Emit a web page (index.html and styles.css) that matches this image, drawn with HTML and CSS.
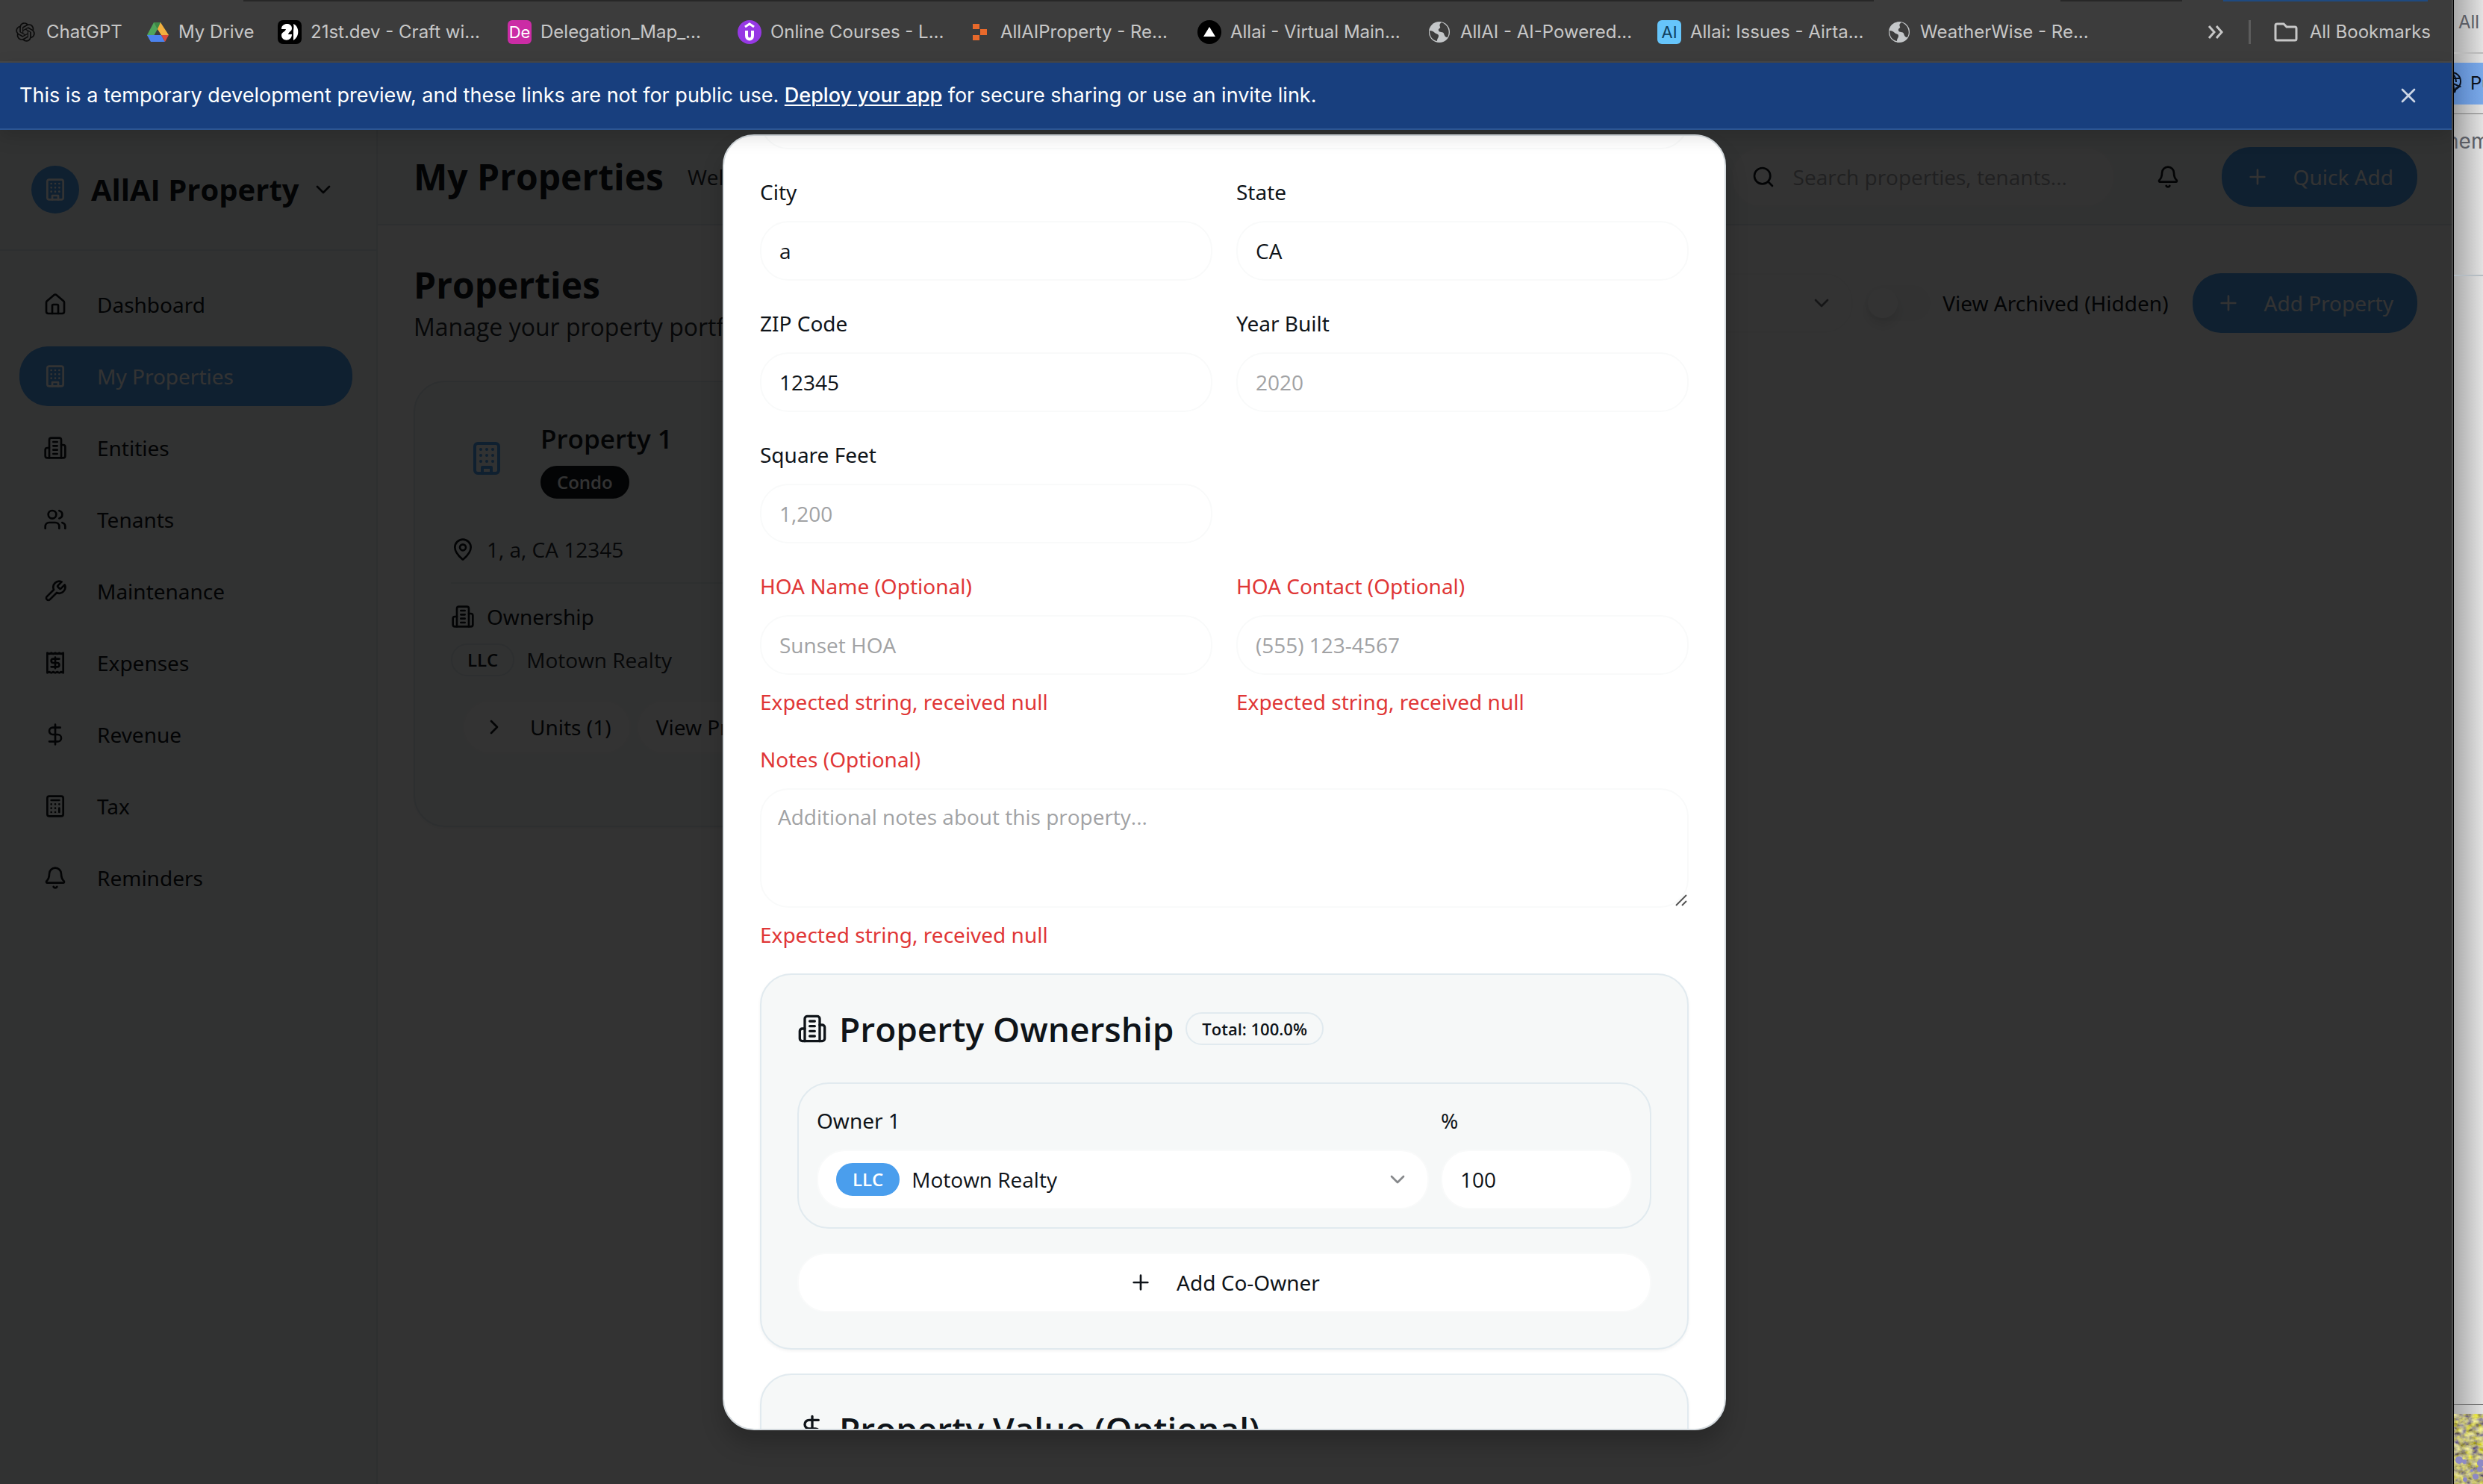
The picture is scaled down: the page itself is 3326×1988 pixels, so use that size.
FILE: index.html
```html
<!DOCTYPE html>
<html lang="en">
<head>
<meta charset="utf-8">
<title>AllAI Property - My Properties</title>
<link rel="stylesheet" href="styles.css">
</head>
<body>
<svg class="sprite" aria-hidden="true">
  <symbol id="i-building" viewBox="0 0 24 24"><rect width="16" height="20" x="4" y="2" rx="2"/><path d="M9 22v-4h6v4M8 6h.01M16 6h.01M12 6h.01M12 10h.01M12 14h.01M16 10h.01M16 14h.01M8 10h.01M8 14h.01"/></symbol>
  <symbol id="i-building2" viewBox="0 0 24 24"><path d="M6 22V4a2 2 0 0 1 2-2h8a2 2 0 0 1 2 2v18Z"/><path d="M6 12H4a2 2 0 0 0-2 2v6a2 2 0 0 0 2 2h2M18 9h2a2 2 0 0 1 2 2v9a2 2 0 0 1-2 2h-2M10 6h4M10 10h4M10 14h4M10 18h4"/></symbol>
  <symbol id="i-home" viewBox="0 0 24 24"><path d="M15 21v-8a1 1 0 0 0-1-1h-4a1 1 0 0 0-1 1v8"/><path d="M3 10a2 2 0 0 1 .709-1.528l7-5.999a2 2 0 0 1 2.582 0l7 5.999A2 2 0 0 1 21 10v9a2 2 0 0 1-2 2H5a2 2 0 0 1-2-2z"/></symbol>
  <symbol id="i-users" viewBox="0 0 24 24"><path d="M16 21v-2a4 4 0 0 0-4-4H6a4 4 0 0 0-4 4v2"/><circle cx="9" cy="7" r="4"/><path d="M22 21v-2a4 4 0 0 0-3-3.87M16 3.13a4 4 0 0 1 0 7.75"/></symbol>
  <symbol id="i-wrench" viewBox="0 0 24 24"><path d="M14.7 6.3a1 1 0 0 0 0 1.4l1.6 1.6a1 1 0 0 0 1.4 0l3.77-3.77a6 6 0 0 1-7.94 7.94l-6.91 6.91a2.12 2.12 0 0 1-3-3l6.91-6.91a6 6 0 0 1 7.94-7.94l-3.76 3.76z"/></symbol>
  <symbol id="i-receipt" viewBox="0 0 24 24"><path d="M4 2v20l2-1 2 1 2-1 2 1 2-1 2 1 2-1 2 1V2l-2 1-2-1-2 1-2-1-2 1-2-1-2 1Z"/><path d="M16 8h-6a2 2 0 1 0 0 4h4a2 2 0 1 1 0 4H8M12 17.5v-11"/></symbol>
  <symbol id="i-dollar" viewBox="0 0 24 24"><path d="M12 2v20M17 5H9.5a3.5 3.5 0 0 0 0 7h5a3.5 3.5 0 0 1 0 7H6"/></symbol>
  <symbol id="i-calc" viewBox="0 0 24 24"><rect width="16" height="20" x="4" y="2" rx="2"/><path d="M8 6h8M16 14v4M16 10h.01M12 10h.01M8 10h.01M12 14h.01M8 14h.01M12 18h.01M8 18h.01"/></symbol>
  <symbol id="i-bell" viewBox="0 0 24 24"><path d="M10.268 21a2 2 0 0 0 3.464 0"/><path d="M3.262 15.326A1 1 0 0 0 4 17h16a1 1 0 0 0 .74-1.673C19.41 13.956 18 12.499 18 8A6 6 0 0 0 6 8c0 4.499-1.411 5.956-2.738 7.326"/></symbol>
  <symbol id="i-pin" viewBox="0 0 24 24"><path d="M20 10c0 4.993-5.539 10.193-7.399 11.799a1 1 0 0 1-1.202 0C9.539 20.193 4 14.993 4 10a8 8 0 0 1 16 0"/><circle cx="12" cy="10" r="3"/></symbol>
  <symbol id="i-search" viewBox="0 0 24 24"><circle cx="11" cy="11" r="8"/><path d="m21 21-4.3-4.3"/></symbol>
  <symbol id="i-plus" viewBox="0 0 24 24"><path d="M5 12h14M12 5v14"/></symbol>
  <symbol id="i-down" viewBox="0 0 24 24"><path d="m6 9 6 6 6-6"/></symbol>
  <symbol id="i-right" viewBox="0 0 24 24"><path d="m9 18 6-6-6-6"/></symbol>
  <symbol id="i-x" viewBox="0 0 24 24"><path d="M18 6 6 18M6 6l12 12"/></symbol>
  <symbol id="i-globe" viewBox="0 0 32 32"><circle cx="16" cy="16" r="14" fill="#c4c7c9" stroke="none"/><path d="M3 14c3 0 5 1 7 3s5 1 5 4-2 3-2 7c-6-1-10-6-10-14zM19 3c-3 2-3 4-2 6s-3 2-2 5 6 1 7 4 2 5 5 5c4-7 1-17-8-20z" fill="#3c3c3c" stroke="none"/></symbol>
</svg>
<div class="desktop">
  <div class="window">
    <div class="tab-edge"><i class="edge-tabs"></i><i class="edge-box"></i><i class="edge-blue"></i></div>
    <nav class="bookmarks" aria-label="Bookmarks">
      <a class="bookmark bookmark--short" href="#"><svg class="favicon" viewBox="-3 -3 30 30"><path fill="#0c0c0c" d="M22.2819 9.8211a5.9847 5.9847 0 0 0-.5157-4.9108 6.0462 6.0462 0 0 0-6.5098-2.9A6.0651 6.0651 0 0 0 4.9807 4.1818a5.9847 5.9847 0 0 0-3.9977 2.9 6.0462 6.0462 0 0 0 .7427 7.0966 5.98 5.98 0 0 0 .511 4.9107 6.051 6.051 0 0 0 6.5146 2.9001A5.9847 5.9847 0 0 0 13.2599 24a6.0557 6.0557 0 0 0 5.7718-4.2058 5.9894 5.9894 0 0 0 3.9977-2.9001 6.0557 6.0557 0 0 0-.7475-7.0729zm-9.022 12.6081a4.4755 4.4755 0 0 1-2.8764-1.0408l.1419-.0804 4.7783-2.7582a.7948.7948 0 0 0 .3927-.6813v-6.7369l2.02 1.1686a.071.071 0 0 1 .038.052v5.5826a4.504 4.504 0 0 1-4.4945 4.4944zm-9.6607-4.1254a4.4708 4.4708 0 0 1-.5346-3.0137l.142.0852 4.783 2.7582a.7712.7712 0 0 0 .7806 0l5.8428-3.3685v2.3324a.0804.0804 0 0 1-.0332.0615L9.74 19.9502a4.4992 4.4992 0 0 1-6.1408-1.6464zM2.3408 7.8956a4.485 4.485 0 0 1 2.3655-1.9728V11.6a.7664.7664 0 0 0 .3879.6765l5.8144 3.3543-2.0201 1.1685a.0757.0757 0 0 1-.071 0l-4.8303-2.7865A4.504 4.504 0 0 1 2.3408 7.872zm16.5963 3.8558L13.1038 8.364 15.1192 7.2a.0757.0757 0 0 1 .071 0l4.8303 2.7913a4.4944 4.4944 0 0 1-.6765 8.1042v-5.6772a.79.79 0 0 0-.407-.667zm2.0107-3.0231l-.142-.0852-4.7735-2.7818a.7759.7759 0 0 0-.7854 0L9.409 9.2297V6.8974a.0662.0662 0 0 1 .0284-.0615l4.8303-2.7866a4.4992 4.4992 0 0 1 6.6802 4.66zM8.3065 12.863l-2.02-1.1638a.0804.0804 0 0 1-.038-.0567V6.0742a4.4992 4.4992 0 0 1 7.3757-3.4537l-.142.0805L8.704 5.459a.7948.7948 0 0 0-.3927.6813zm1.0976-2.3654l2.602-1.4998 2.6069 1.4998v2.9994l-2.5974 1.4997-2.6067-1.4997Z"/></svg>ChatGPT</a>
      <a class="bookmark bookmark--short" href="#"><svg class="favicon" viewBox="0 0 32 32"><path d="M11 3h10l-5 9-9 16-5-8z" fill="#4fa55a"/><path d="M11 3h10l-5 9z" fill="#3f8746"/><path d="M20 3l11 17H21l-5-8z" fill="#f3b03f"/><path d="M7 29l-5-9h19l5 9z" fill="#4c83ee"/><path d="M26 29l-5-9h10z" fill="#dc4b3c"/></svg>My Drive</a>
      <a class="bookmark" href="#"><svg class="favicon" viewBox="0 0 32 32"><rect width="32" height="32" rx="7" fill="#000"/><path d="M5 12C5 3 19 3 19 11c0 4-4 4-5 8h5c0 10-14 10-14 1 0-4 5-4 6-8z" fill="#fff"/><path d="M21 5c8 3 9 17 0 22V16c0-4 1-6 0-11z" fill="#fff"/></svg>21st.dev - Craft wi...</a>
      <a class="bookmark" href="#"><span class="favicon favicon--pink">De</span>Delegation_Map_...</a>
      <a class="bookmark" href="#"><svg class="favicon" viewBox="0 0 32 32" fill="none" stroke="#fff"><circle cx="16" cy="16" r="16" fill="#9638e4" stroke="none"/><path d="M12 14v7c0 6 8 6 8 0v-7" stroke-width="4"/><path d="M10 9l6-4 6 4" stroke-width="3"/></svg>Online Courses - L...</a>
      <a class="bookmark" href="#"><svg class="favicon" viewBox="0 0 32 32"><path d="M7 5h9v7H7zM17 12h9v8h-9zM7 20h9v7H7z" fill="#e8692b"/></svg>AllAIProperty - Re...</a>
      <a class="bookmark" href="#"><svg class="favicon" viewBox="0 0 32 32"><circle cx="16" cy="16" r="16" fill="#000"/><path d="M16 9l8 13H8z" fill="#fff"/></svg>Allai - Virtual Main...</a>
      <a class="bookmark" href="#"><svg class="favicon"><use href="#i-globe"/></svg>AllAI - AI-Powered...</a>
      <a class="bookmark" href="#"><span class="favicon favicon--sky">AI</span>Allai: Issues - Airta...</a>
      <a class="bookmark" href="#"><svg class="favicon"><use href="#i-globe"/></svg>WeatherWise - Re...</a>
      <button class="more" type="button" aria-label="More bookmarks"><svg viewBox="0 0 32 32" fill="none" stroke="#c7c7c7" stroke-width="3"><path d="M7 8l7 8-7 8M17 8l7 8-7 8"/></svg></button>
      <a class="bookmark bookmark--all" href="#"><svg class="favicon" viewBox="0 0 32 32" fill="none" stroke="#c7c7c7" stroke-width="3"><path d="M2 7a2 2 0 0 1 2-2h9l4 4h11a2 2 0 0 1 2 2v14a2 2 0 0 1-2 2H4a2 2 0 0 1-2-2z"/></svg>All Bookmarks</a>
    </nav>
    <div class="banner">
      <p>This is a temporary development preview, and these links are not for public use. <a href="#">Deploy your app</a> for secure sharing or use an invite link.</p>
      <button type="button" aria-label="Dismiss"><svg class="icon"><use href="#i-x"/></svg></button>
    </div>
    <div class="page">
      <div class="app">
        <aside class="sidebar">
          <div class="brand"><span class="logo"><svg class="icon"><use href="#i-building"/></svg></span><strong>AllAI Property</strong><svg class="icon"><use href="#i-down"/></svg></div>
          <nav class="menu">
            <a href="#"><svg class="icon"><use href="#i-home"/></svg>Dashboard</a>
            <a class="active" href="#"><svg class="icon"><use href="#i-building"/></svg>My Properties</a>
            <a href="#"><svg class="icon"><use href="#i-building2"/></svg>Entities</a>
            <a href="#"><svg class="icon"><use href="#i-users"/></svg>Tenants</a>
            <a href="#"><svg class="icon"><use href="#i-wrench"/></svg>Maintenance</a>
            <a href="#"><svg class="icon"><use href="#i-receipt"/></svg>Expenses</a>
            <a href="#"><svg class="icon"><use href="#i-dollar"/></svg>Revenue</a>
            <a href="#"><svg class="icon"><use href="#i-calc"/></svg>Tax</a>
            <a href="#"><svg class="icon"><use href="#i-bell"/></svg>Reminders</a>
          </nav>
        </aside>
        <div class="main">
          <header class="topbar">
            <h1>My Properties</h1>
            <span class="welcome">Welcome</span>
            <label class="search"><svg class="icon"><use href="#i-search"/></svg><input type="search" aria-label="Search" placeholder="Search properties, tenants..."></label>
            <button class="bell" type="button" aria-label="Notifications"><svg class="icon"><use href="#i-bell"/></svg></button>
            <button class="primary" type="button"><svg class="icon"><use href="#i-plus"/></svg>Quick Add</button>
          </header>
          <main class="content">
            <div class="heading">
              <div class="heading-text"><h2>Properties</h2><p>Manage your property portfolio</p></div>
              <div class="filter"><select aria-label="Entity filter"><option>All Entities</option></select><svg class="icon"><use href="#i-down"/></svg></div>
              <label class="switch"><input type="checkbox">View Archived (Hidden)</label>
              <button class="primary" type="button"><svg class="icon"><use href="#i-plus"/></svg>Add Property</button>
            </div>
            <div class="cards">
              <article class="property">
                <div class="property-head"><span class="property-icon"><svg class="icon icon--xl"><use href="#i-building"/></svg></span><div><h3>Property 1</h3><span class="badge badge--dark">Condo</span></div></div>
                <p class="line"><svg class="icon"><use href="#i-pin"/></svg><span class="muted">1, a, CA 12345</span></p>
                <div class="ownership">
                  <p class="line medium"><svg class="icon"><use href="#i-building2"/></svg>Ownership</p>
                  <p class="line"><span class="badge">LLC</span><span class="muted">Motown Realty</span></p>
                </div>
                <div class="property-actions"><button type="button"><svg class="icon"><use href="#i-right"/></svg>Units (1)</button><button type="button">View Property</button></div>
              </article>
            </div>
          </main>
        </div>
      </div>
      <div class="overlay">
        <div class="modal" role="dialog" aria-label="Edit property">
          <form class="form">
            <input class="input wide" type="text" aria-label="Street address">
            <div class="field"><label for="city">City</label><input class="input" id="city" value="a"></div>
            <div class="field"><label for="state">State</label><input class="input" id="state" value="CA"></div>
            <div class="field"><label for="zip">ZIP Code</label><input class="input" id="zip" value="12345"></div>
            <div class="field"><label for="year">Year Built</label><input class="input" id="year" placeholder="2020"></div>
            <div class="field first"><label for="sqft">Square Feet</label><input class="input" id="sqft" placeholder="1,200"></div>
            <div class="field invalid first"><label for="hoa">HOA Name (Optional)</label><input class="input" id="hoa" placeholder="Sunset HOA"><p>Expected string, received null</p></div>
            <div class="field invalid"><label for="hoac">HOA Contact (Optional)</label><input class="input" id="hoac" placeholder="(555) 123-4567"><p>Expected string, received null</p></div>
            <div class="field invalid wide"><label for="notes">Notes (Optional)</label><div class="notes"><textarea class="input" id="notes" placeholder="Additional notes about this property..."></textarea><svg class="grip" viewBox="0 0 16 16"><path d="M1 15 15 1M9 15l6-6"/></svg></div><p>Expected string, received null</p></div>
            <section class="panel wide">
              <h2><svg class="icon icon--lg"><use href="#i-building2"/></svg>Property Ownership<span class="badge badge--total">Total: 100.0%</span></h2>
              <div class="owner">
                <div class="field"><label for="owner">Owner 1</label><div class="input picker"><span class="badge badge--blue">LLC</span><select id="owner"><option>Motown Realty</option></select><svg class="icon"><use href="#i-down"/></svg></div></div>
                <div class="field"><label for="pct">%</label><input class="input" id="pct" value="100"></div>
              </div>
              <button class="input add" type="button"><svg class="icon"><use href="#i-plus"/></svg>Add Co-Owner</button>
            </section>
            <section class="panel wide">
              <h2><svg class="icon icon--lg"><use href="#i-dollar"/></svg>Property Value (Optional)</h2>
            </section>
          </form>
        </div>
      </div>
    </div>
  </div>
  <div class="behind">
    <p class="behind-bar">All</p>
    <p class="behind-publish"><svg viewBox="0 0 26 32" fill="none" stroke="#0a1220" stroke-width="2"><circle cx="13" cy="13" r="12"/><path d="M1 9h24M1 17h14M12 1c-7 7-7 17 0 24M13 1c5 5 6 9 6 13M15 16l9 4-5 2-2 6z"/></svg>Publish</p>
    <p class="behind-text">hem</p>
    <div class="behind-body"></div>
    <div class="behind-foot"></div>
    <svg class="wallpaper" aria-hidden="true">
      <filter id="meadow" x="0" y="0" width="100%" height="100%"><feTurbulence type="fractalNoise" baseFrequency=".12 .16" numOctaves="3" seed="4"/><feColorMatrix values="1.2 0 0 0 -.1  1.2 0 0 0 -.13  0 0 .6 0 -.1  0 0 0 0 1"/></filter>
      <rect width="100%" height="100%" filter="url(#meadow)"/>
      <g fill="#8d89c4"><circle cx="7" cy="62" r="5"/><circle cx="14" cy="64" r="3"/><circle cx="36" cy="66" r="5"/><circle cx="29" cy="84" r="4"/><circle cx="15" cy="88" r="3"/><circle cx="35" cy="74" r="4"/><circle cx="24" cy="76" r="2"/></g>
    </svg>
  </div>
</div>
</body>
</html>
```
FILE: styles.css
```css
* { box-sizing: border-box; }
:root {
  --fg: #0f1419;
  --muted: #25292e;
  --primary: #4a9eed;
  --panel: #f6f8f8;
  --line: #e1eaef;
  --field: #f9fafa;
  --danger: #e03636;
  --medium: "Noto Sans", "Open Sans", sans-serif;
}
html, body { height: 100%; }
body { margin: 0; font: 28px/40px "Open Sans", "Noto Sans", sans-serif; color: var(--fg); overflow: hidden; }
h1, h2, h3, p { margin: 0; }
a { color: inherit; text-decoration: none; }
button, input, select, textarea { font: inherit; color: inherit; border: 0; background: none; padding: 0; margin: 0; }
input, textarea, select { outline: 0; min-width: 0; }
select { appearance: none; }
.sprite { position: absolute; width: 0; height: 0; }
.icon { width: 32px; height: 32px; flex: none; fill: none; stroke: currentColor; stroke-width: 2; stroke-linecap: round; stroke-linejoin: round; }
.icon--lg { width: 40px; height: 40px; }
.icon--xl { width: 48px; height: 48px; }

.desktop { display: flex; min-height: 100vh; }
.window { flex: 1; min-width: 0; display: flex; flex-direction: column; border-right: 2px solid #4d4d4d; background: #3c3c3c; }

.tab-edge { display: flex; height: 2px; padding: 0 32px 0 326px; }
.edge-tabs { flex: 1; background: #272727; margin-right: 250px; }
.edge-box { width: 163px; background: #272727; margin-right: 55px; }
.edge-blue { width: 274px; background: #1f4a80; }
.bookmarks { display: flex; align-items: center; height: 82px; padding: 2px 28px 0 18px; border-bottom: 2px solid #474747; font: 24px/32px Inter, sans-serif; color: #c7c7c7; }
.bookmark { display: flex; align-items: center; gap: 12px; width: 308px; white-space: nowrap; }
.bookmark--short { width: 177px; }
.favicon { width: 32px; height: 32px; flex: none; }
.favicon--pink, .favicon--sky { border-radius: 6px; font-size: 22px; text-align: center; }
.favicon--pink { background: #cb2ca5; color: #fff; }
.favicon--sky { background: #66c5fb; color: #10405f; }
.more { margin-left: auto; width: 32px; height: 32px; }
.more svg { width: 32px; height: 32px; display: block; }
.bookmark--all { width: auto; gap: 16px; margin-left: 28px; position: relative; padding-left: 34px; }
.bookmark--all::before { content: ""; position: absolute; left: 0; width: 3px; height: 32px; background: #5c5c5c; }

.banner { position: relative; z-index: 2; display: flex; align-items: center; justify-content: space-between; height: 90px; padding: 0 42px 0 26px; background: #183f7e; border-bottom: 2px solid #2c5592; color: #fff; font: 27px/40px Inter, sans-serif; box-shadow: 0 8px 24px rgba(0, 0, 0, .15); }
.banner a { font-weight: 500; text-decoration: underline; text-underline-offset: 3px; text-decoration-thickness: 2px; }
.banner button { display: flex; color: #ccd6e6; }

.page { flex: 1; position: relative; display: flex; background: #fff; }
.app { flex: 1; min-width: 0; display: flex; }
.sidebar { width: 506px; flex: none; background: var(--panel); border-right: 2px solid var(--line); }
.brand { display: flex; align-items: center; height: 162px; padding: 0 42px; border-bottom: 2px solid var(--line); font-size: 40px; line-height: 56px; }
.brand strong { margin: 0 16px; }
.logo { display: grid; place-items: center; width: 64px; height: 64px; border-radius: 50%; background: var(--primary); color: #fff; }
.menu { display: grid; gap: 16px; padding: 32px 32px 32px 26px; font-family: var(--medium); }
.menu a { display: flex; align-items: center; gap: 40px; height: 80px; padding: 0 32px; border-radius: 38px; }
.menu .active { background: var(--primary); color: #fff; }

.main { flex: 1; min-width: 0; }
.topbar { display: flex; align-items: center; gap: 32px; height: 128px; padding: 0 46px 0 48px; background: var(--panel); border-bottom: 2px solid var(--line); }
h1, .heading h2 { font-size: 48px; line-height: 64px; font-weight: 700; }
.welcome { color: var(--muted); }
.search { display: flex; align-items: center; gap: 24px; width: 512px; height: 80px; margin-left: auto; padding: 0 24px; border: 2px solid var(--field); border-radius: 38px; background: #fff; }
.search input { flex: 1; }
::placeholder { color: #a1a2a4; opacity: 1; }
.bell { display: grid; place-items: center; width: 80px; height: 80px; }
.primary { display: flex; align-items: center; gap: 32px; height: 80px; padding: 0 32px; border-radius: 38px; background: var(--primary); color: #fff; font-family: var(--medium); }
.content { padding: 48px 46px 48px 48px; }
.heading { display: flex; align-items: center; }
.heading-text { flex: 1; }
.heading-text p { font-size: 32px; line-height: 48px; color: var(--muted); }
.filter { display: flex; align-items: center; width: 384px; height: 80px; padding: 0 24px; border: 2px solid var(--field); border-radius: 38px; }
.filter select { flex: 1; }
.filter .icon { opacity: .6; }
.switch { display: flex; align-items: center; gap: 16px; margin: 0 32px 0 16px; font-family: var(--medium); }
.switch input { appearance: none; width: 88px; height: 48px; padding: 4px; border-radius: 24px; background: #f9fafa; }
.switch input::before { content: ""; display: block; width: 40px; height: 40px; border-radius: 50%; background: #fff; box-shadow: 0 10px 16px rgba(0, 0, 0, .1); }
.cards { display: grid; grid-template-columns: repeat(3, 1fr); gap: 48px; margin-top: 48px; }
.property { padding: 48px 48px 96px; border: 2px solid var(--line); border-radius: 42px; background: var(--panel); box-shadow: 0 2px 4px rgba(0, 0, 0, .05); }
.property-head { display: flex; align-items: center; gap: 24px; }
.property-icon { display: grid; place-items: center; width: 96px; height: 96px; color: var(--primary); }
h3 { font-size: 35px; line-height: 56px; font-weight: 600; margin-bottom: 8px; }
.badge { display: flex; align-items: center; width: fit-content; height: 44px; padding: 0 20px; border: 2px solid var(--line); border-radius: 22px; font-size: 24px; line-height: 32px; font-weight: 600; }
.badge--dark { background: var(--fg); border-color: var(--fg); color: #fff; }
.badge--blue { background: var(--primary); border-color: var(--primary); color: #fff; }
.badge--total { font-size: 22px; }
.line { display: flex; align-items: center; gap: 16px; }
.medium { font-family: var(--medium); }
.muted { color: var(--muted); }
.property-head + .line { margin-top: 48px; }
.ownership { margin-top: 24px; padding-top: 24px; border-top: 2px solid var(--line); }
.ownership .line + .line { margin-top: 16px; }
.property-actions { display: flex; gap: 8px; margin-top: 32px; padding-left: 16px; font-family: var(--medium); }
.property-actions button { display: flex; align-items: center; gap: 32px; height: 72px; padding: 0 24px; border: 2px solid var(--field); border-radius: 36px; background: #fff; white-space: nowrap; }

.overlay { position: absolute; inset: 0; display: flex; justify-content: center; align-items: flex-start; padding: 6px 4px 72px 0; background: rgba(0, 0, 0, .8); }
.modal { width: 1344px; height: 100%; overflow: hidden; border: 2px solid #d5dbdf; border-radius: 42px; background: #fff; box-shadow: 0 20px 30px rgba(0, 0, 0, .2); }
.form { display: grid; grid-template-columns: 1fr 1fr; gap: 32px; padding: 0 48px 48px; margin-top: -62px; }
.wide { grid-column: 1 / -1; }
.first { grid-column: 1; }
.field { min-width: 0; }
.field label { display: block; line-height: 50px; margin-bottom: 14px; font-family: var(--medium); }
.input { display: block; width: 100%; height: 80px; padding: 0 24px; border: 2px solid var(--field); border-radius: 38px; background: #fff; }
.notes { position: relative; }
textarea.input { height: 160px; padding: 16px 22px; resize: none; }
.grip { position: absolute; right: 2px; bottom: 2px; width: 16px; height: 16px; fill: none; stroke: #555; stroke-width: 2; }
.field p { margin-top: 16px; }
.invalid label, .invalid p { color: var(--danger); font-family: var(--medium); }
.panel { padding: 48px; border: 2px solid var(--line); border-radius: 42px; background: var(--panel); box-shadow: 0 2px 4px rgba(0, 0, 0, .05); }
.panel h2 { display: flex; align-items: center; gap: 16px; font-size: 46px; line-height: 48px; font-weight: 600; margin-bottom: 48px; }
.owner { display: grid; grid-template-columns: 1fr 256px; gap: 16px; padding: 24px; border: 2px solid var(--line); border-radius: 42px; }
.picker { display: flex; align-items: center; gap: 16px; }
.picker select { flex: 1; }
.picker .icon { opacity: .5; }
.add { display: flex; align-items: center; justify-content: center; gap: 32px; margin-top: 32px; font-family: var(--medium); }

.behind { width: 40px; flex: none; display: flex; flex-direction: column; overflow: hidden; border-left: 1px solid #000; background: linear-gradient(90deg, #aaa, #e2e2e2); font: 26px/32px Inter, sans-serif; color: #5a5c63; }
.behind-bar { height: 72px; padding: 14px 0 0 6px; border-bottom: 2px solid #b9b9b9; font-size: 24px; }
.behind-publish { display: flex; align-items: center; gap: 12px; height: 56px; margin-top: 12px; background: linear-gradient(90deg, #5c88c8, #79a8e8); color: #0a0f18; font-size: 24px; }
.behind-publish svg { width: 26px; height: 32px; flex: none; margin-left: -16px; }
.behind-text { height: 218px; margin-top: 12px; padding-top: 20px; border-top: 1px solid #777; border-bottom: 2px solid #b4bcc2; font-size: 28px; text-indent: -10px; }
.behind-body { flex: 1; }
.behind-foot { height: 13px; border-top: 1px solid #777; }
.wallpaper { display: block; width: 40px; height: 94px; }
```
